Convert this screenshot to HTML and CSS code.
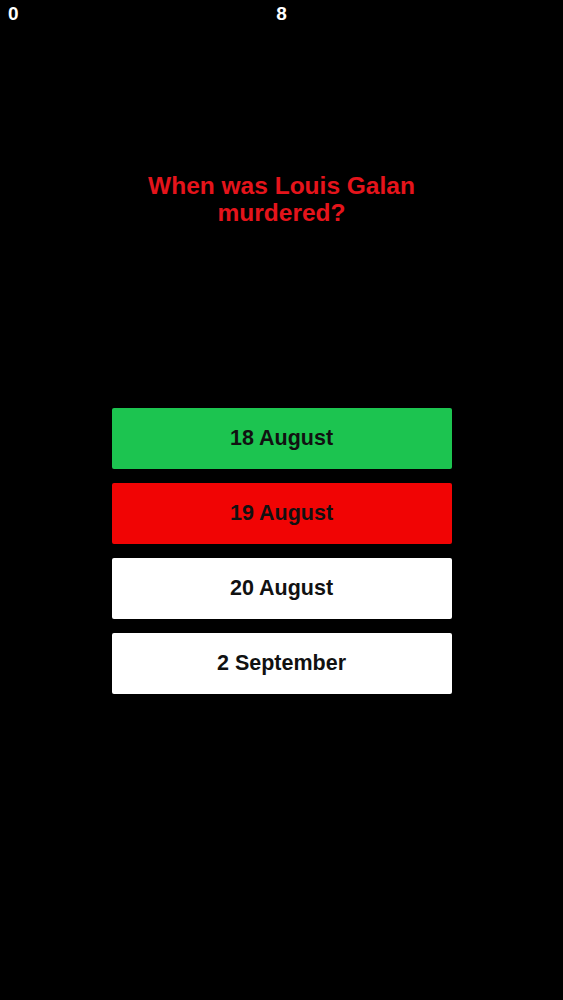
FILE: index.html
```html
<!DOCTYPE html>
<html lang="en">
<head>
<meta charset="utf-8">
<title>Quiz</title>
<link rel="stylesheet" href="styles.css">
</head>
<body>
<div class="app">
  <header class="topbar">
    <span class="score">0</span>
    <span class="timer">8</span>
    <span></span>
  </header>
  <h1 class="question">When was Louis Galan murdered?</h1>
  <div class="answers">
    <button class="answer correct">18 August</button>
    <button class="answer wrong">19 August</button>
    <button class="answer">20 August</button>
    <button class="answer">2 September</button>
  </div>
</div>
</body>
</html>
```
FILE: styles.css
```css
html, body {
  margin: 0;
  padding: 0;
  background: #000;
}
body {
  font-family: "Liberation Sans", Arial, sans-serif;
  width: 563px;
  height: 1000px;
  overflow: hidden;
}
.app {
  display: flex;
  flex-direction: column;
}
.topbar {
  display: grid;
  grid-template-columns: 1fr auto 1fr;
  padding: 3px 8px 0 8px;
  color: #fff;
  font-weight: bold;
  font-size: 19px;
  line-height: 22px;
}
.score { justify-self: start; }
.timer { justify-self: center; }
.question {
  margin: 147px auto 0 auto;
  width: 300px;
  text-align: center;
  color: #e5141b;
  font-size: 24.5px;
  line-height: 27px;
  font-weight: bold;
}
.answers {
  margin: 182px auto 0 auto;
  width: 340px;
  display: flex;
  flex-direction: column;
  gap: 14px;
}
.answer {
  height: 61px;
  border: none;
  border-radius: 2px;
  background: #fff;
  color: #111;
  font-family: "Liberation Sans", Arial, sans-serif;
  font-weight: bold;
  font-size: 21.5px;
  padding: 0;
}
.answer.correct { background: #1cc450; }
.answer.wrong { background: #f10404; }
```
